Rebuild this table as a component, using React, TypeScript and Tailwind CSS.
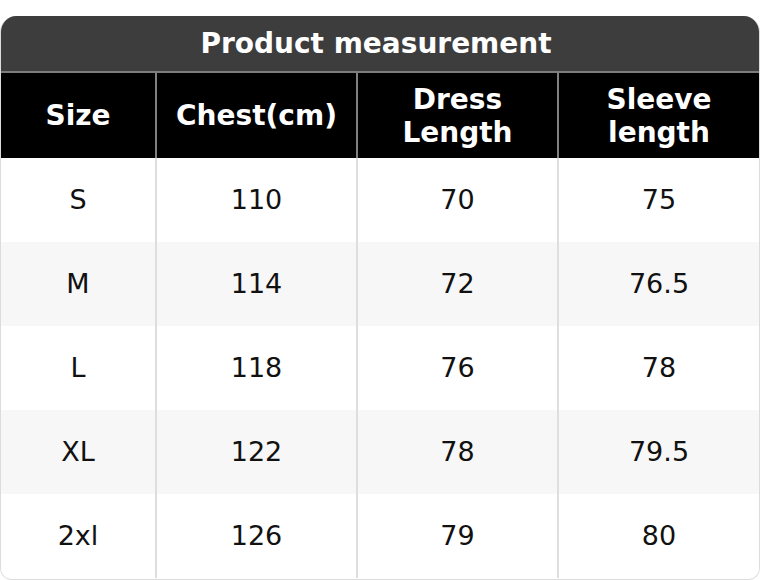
const headers = ["Size", "Chest(cm)", "Dress\nLength", "Sleeve\nlength"];

const rows = [
  ["S", "110", "70", "75"],
  ["M", "114", "72", "76.5"],
  ["L", "118", "76", "78"],
  ["XL", "122", "78", "79.5"],
  ["2xl", "126", "79", "80"],
];

const cols = "grid grid-cols-[154px_201px_201px_1fr]";

export default function App() {
  return (
    <div
      className="w-[760px] h-[580px] bg-white pt-4"
      style={{ fontFamily: '"DejaVu Sans", sans-serif' }}
    >
      <div className="h-[564px] rounded-t-[16px] rounded-b-[12px] border border-t-0 border-[#dcdcdc] overflow-hidden flex flex-col">
        <div className="h-[57px] bg-[#3d3d3d] border-b-2 border-[#7c7c7c] flex items-center justify-center pr-[8px] text-white font-bold text-[28px]">
          Product measurement
        </div>
        <div className={`${cols} h-[85px] bg-black`}>
          {headers.map((h, i) => (
            <div
              key={h}
              className={`flex items-center justify-center text-center whitespace-pre-line text-white font-bold text-[28px] leading-[33px] ${
                i > 0 ? "border-l-2 border-[#808080]" : ""
              }`}
            >
              {h}
            </div>
          ))}
        </div>
        {rows.map((r, ri) => (
          <div
            key={r[0]}
            className={`${cols} h-[84px] ${ri % 2 === 1 ? "bg-[#f7f7f7]" : "bg-white"}`}
          >
            {r.map((c, i) => (
              <div
                key={i}
                className={`flex items-center justify-center text-[#111] text-[27px] ${
                  i > 0 ? "border-l-2 border-[#dedede]" : ""
                }`}
              >
                {c}
              </div>
            ))}
          </div>
        ))}
      </div>
    </div>
  );
}
